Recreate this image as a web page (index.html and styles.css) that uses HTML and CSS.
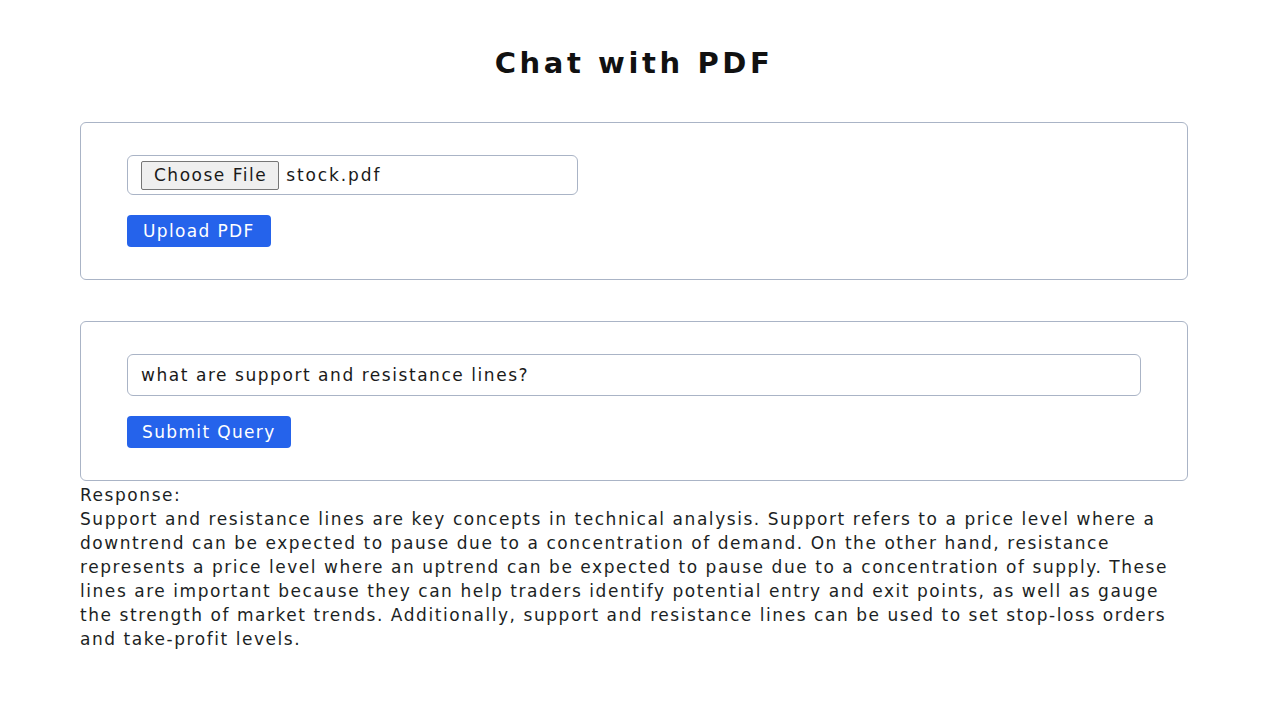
FILE: index.html
```html
<!DOCTYPE html>
<html>
<head>
<meta charset="utf-8">
<title>Chat with PDF</title>
<link rel="stylesheet" href="styles.css">
</head>
<body>
<div class="page">
  <h1 class="title">Chat with PDF</h1>
  <form class="card">
    <div class="file-field">
      <span class="file-btn">Choose File</span>
      <span class="file-name">stock.pdf</span>
    </div>
    <button type="button" class="btn btn-upload">Upload PDF</button>
  </form>
  <form class="card card-query">
    <input class="query" type="text" value="what are support and resistance lines?">
    <button type="button" class="btn">Submit Query</button>
  </form>
  <div class="response">
    <div>Response:</div>
    <p class="answer">Support and resistance lines are key concepts in technical analysis. Support refers to a price level where a downtrend can be expected to pause due to a concentration of demand. On the other hand, resistance represents a price level where an uptrend can be expected to pause due to a concentration of supply. These lines are important because they can help traders identify potential entry and exit points, as well as gauge the strength of market trends. Additionally, support and resistance lines can be used to set stop-loss orders and take-profit levels.</p>
  </div>
</div>
</body>
</html>
```
FILE: styles.css
```css
* { box-sizing: border-box; }
body {
  margin: 0;
  background: #fff;
  font-family: "DejaVu Sans", "Noto Sans", sans-serif;
  font-size: 17px;
  letter-spacing: 1.55px;
  color: #1c1f24;
}
.page {
  width: 1108px;
  margin-left: 80px;
}
.title {
  margin: 0;
  padding-top: 46px;
  height: 122px;
  text-align: center;
  font-size: 29px;
  font-weight: 700;
  color: #111;
  letter-spacing: 3.6px;
}
.card {
  border: 1px solid #aab4c6;
  border-radius: 6px;
  padding: 32px 47px 32px 46px;
  height: 158px;
  display: flex;
  flex-direction: column;
  align-items: flex-start;
  gap: 20px;
}
.card-query {
  margin-top: 41px;
  height: 160px;
}
.file-field {
  width: 451px;
  height: 40px;
  border: 1px solid #aab4c6;
  border-radius: 6px;
  display: flex;
  align-items: center;
  padding-left: 13px;
  gap: 7px;
}
.file-btn {
  height: 29px;
  padding: 0 11px 0 12px;
  background: #efefef;
  border: 1px solid #767676;
  border-radius: 2px;
  display: flex;
  align-items: center;
  color: #1a1a1a;
  letter-spacing: 1.5px;
}
.file-name {
  color: #1a1a1a;
  letter-spacing: 1.9px;
}
.query {
  width: 1014px;
  height: 42px;
  border: 1px solid #aab4c6;
  border-radius: 6px;
  padding: 0 13px;
  font-family: inherit;
  font-size: 17px;
  letter-spacing: 1.55px;
  color: #1a1a1a;
  outline: none;
}
.btn {
  height: 32px;
  padding: 0 15px;
  background: #2563eb;
  color: #fff;
  border: none;
  border-radius: 4px;
  font-family: inherit;
  font-size: 17px;
  letter-spacing: 1.35px;
}
.btn-upload {
  padding: 0 16px;
}
.response {
  line-height: 24px;
  padding-top: 2px;
}
.answer { margin: 0; }
```
